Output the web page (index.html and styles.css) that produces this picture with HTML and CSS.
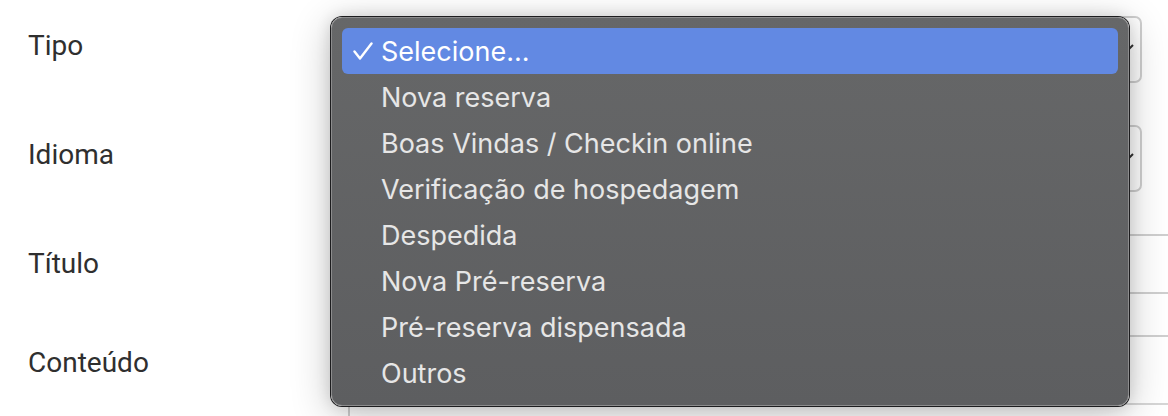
FILE: index.html
```html
<!DOCTYPE html>
<html lang="pt">
<head>
<meta charset="utf-8">
<title>Modelo de mensagem</title>
<link rel="stylesheet" href="styles.css">
</head>
<body>
<div class="page">
  <form class="form">
    <div class="row">
      <label class="label label-up">Tipo</label>
      <div class="select">
        <svg class="chev" viewBox="0 0 14 8" width="14" height="8"><path d="M1 1 L7 7 L13 1" fill="none" stroke="#333" stroke-width="2"/></svg>
      </div>
    </div>
    <div class="row">
      <label class="label label-up">Idioma</label>
      <div class="select">
        <svg class="chev" viewBox="0 0 14 8" width="14" height="8"><path d="M1 1 L7 7 L13 1" fill="none" stroke="#333" stroke-width="2"/></svg>
      </div>
    </div>
    <div class="row">
      <label class="label">Título</label>
      <div class="input"></div>
    </div>
    <div class="row row-top">
      <label class="label label-tall">Conteúdo</label>
      <div class="editor">
        <div class="toolbar"></div>
        <div class="toolbar2">
          <span class="tick"></span><span class="tick"></span><span class="tick"></span><span class="tick"></span><span class="tick"></span><span class="tick"></span>
        </div>
      </div>
    </div>
  </form>

  <ul class="menu">
    <li class="item selected">
      <svg class="check" viewBox="0 0 20 18" width="20" height="18"><path d="M1.5 9.5 L7 16.5 L18.5 1.5" fill="none" stroke="#fff" stroke-width="2.4" stroke-linecap="round" stroke-linejoin="round"/></svg>
      <span>Selecione...</span>
    </li>
    <li class="item"><span>Nova reserva</span></li>
    <li class="item"><span>Boas Vindas / Checkin online</span></li>
    <li class="item"><span>Verificação de hospedagem</span></li>
    <li class="item"><span>Despedida</span></li>
    <li class="item"><span>Nova Pré-reserva</span></li>
    <li class="item"><span>Pré-reserva dispensada</span></li>
    <li class="item"><span>Outros</span></li>
  </ul>
</div>
</body>
</html>
```

FILE: styles.css
```css
* { box-sizing: border-box; }

html, body {
  margin: 0;
  padding: 0;
  background: #ffffff;
  overflow: hidden;
}

.page {
  position: relative;
  width: 1168px;
  height: 416px;
  overflow: hidden;
  font-family: Roboto, "Liberation Sans", sans-serif;
}

.form {
  display: flex;
  flex-direction: column;
  gap: 42px;
  padding: 16px 0 0 28px;
  width: 1220px;
}

.row {
  display: grid;
  grid-template-columns: 320px 1fr;
  align-items: center;
}

.row-top {
  align-items: start;
  margin-top: -1px;
}

.label {
  font-size: 28px;
  color: #2f2f2f;
  line-height: 40px;
}

.label-up {
  margin-bottom: 7px;
}

.label-tall {
  line-height: 56px;
}

.select {
  position: relative;
  width: 794px;
  height: 67px;
  border: 2px solid #cfcfcf;
  border-radius: 7px;
  background: #fff;
}

.chev {
  position: absolute;
  right: 6px;
  top: 26px;
}

.input {
  height: 60px;
  width: 860px;
  border: 2px solid #cfcfcf;
  border-radius: 6px;
  background: #fff;
}

.editor {
  width: 860px;
  border: 2px solid #cfcfcf;
  border-bottom: none;
  border-radius: 6px 6px 0 0;
  background: #fff;
}

.toolbar {
  height: 68px;
  border-bottom: 2px solid #d6d6d6;
  background: #fff;
}

.toolbar2 {
  display: flex;
  height: 40px;
  padding: 6px 0 0 152px;
}

.tick {
  width: 2px;
  height: 4px;
  background: #bbb;
  margin-right: 345px;
}

.menu {
  position: absolute;
  left: 331px;
  top: 17px;
  width: 798px;
  height: 389px;
  margin: 0;
  padding: 10px 10px 9px 10px;
  list-style: none;
  background: linear-gradient(#666768, #5d5e60);
  border: 1px solid #8c8c8d;
  border-radius: 11px;
  box-shadow:
    0 0 0 1px #1d1d1f,
    0 8px 40px rgba(0, 0, 0, 0.24),
    0 0 16px rgba(0, 0, 0, 0.14);
  font-family: Inter, "Noto Sans", sans-serif;
  font-size: 27px;
  color: #e6e6e6;
}

.item {
  position: relative;
  height: 46.1px;
  display: flex;
  align-items: center;
  padding-left: 39px;
  border-radius: 6px;
}

.item.selected {
  background: #6289e3;
  color: #ffffff;
}

.check {
  position: absolute;
  left: 11px;
  top: 14px;
}
```
